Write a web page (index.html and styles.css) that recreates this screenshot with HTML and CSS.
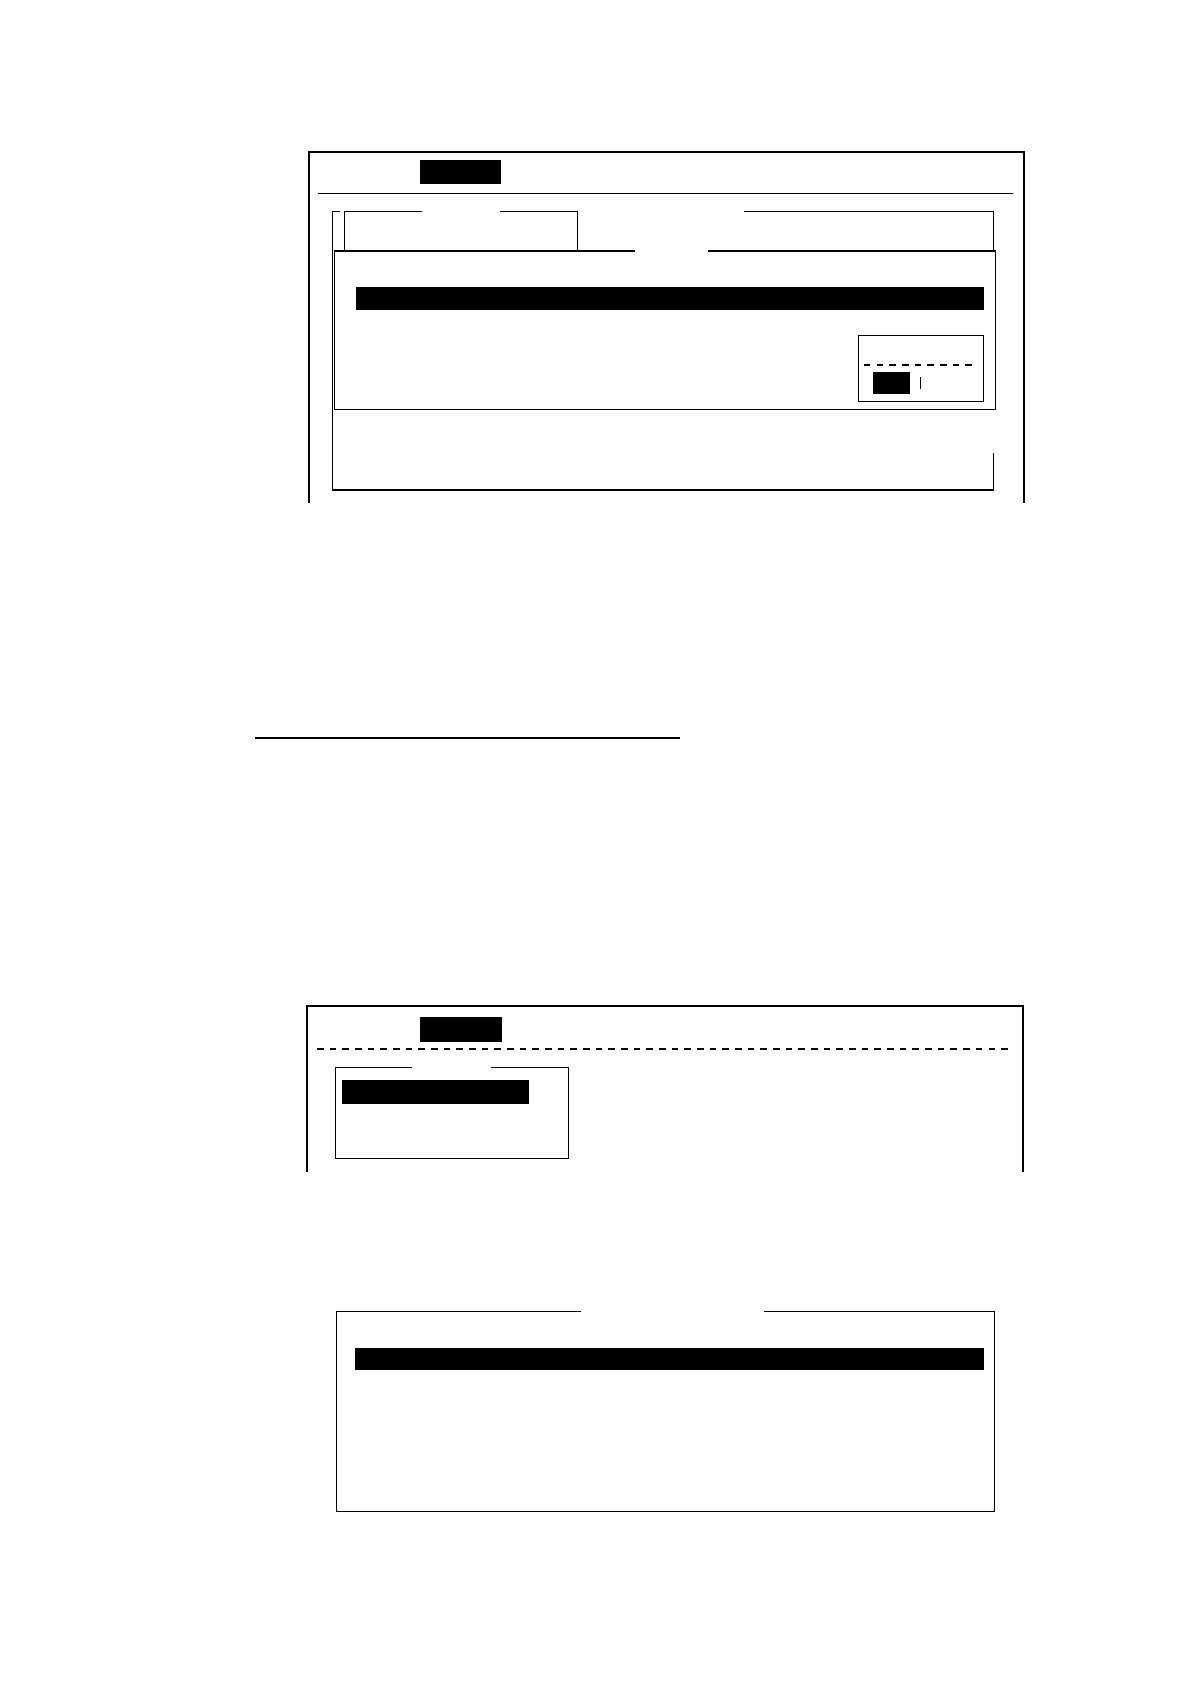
FILE: index.html
```html
<!DOCTYPE html>
<html lang="en">
<head>
<meta charset="utf-8">
<title>Screen figures</title>
<link rel="stylesheet" href="styles.css">
</head>
<body>
<div class="page">

  <section class="frame frame-one">
    <div class="title-row title-row-one"><div class="tag tag-one"></div></div>
    <div class="rule"></div>
    <div class="group">
      <div class="tabs">
        <div class="stub"></div>
        <div class="tab-one">
          <div class="gtop"><div class="seg seg-a"></div><div class="gap gap-a"></div><div class="seg seg-fill"></div></div>
        </div>
        <div class="tab-two"></div>
      </div>
      <div class="panel">
        <div class="ptop"><div class="pseg pseg-a"></div><div class="gap pgap"></div><div class="pseg seg-fill"></div></div>
        <div class="bar pbar"></div>
        <div class="mini">
          <div class="dash mini-dash"></div>
          <div class="mini-row">
            <div class="mtag"></div>
            <div class="cursor"></div>
          </div>
        </div>
      </div>
      <div class="lower"><div class="rstub"></div></div>
    </div>
  </section>

  <div class="sep"></div>

  <section class="frame frame-two">
    <div class="title-row title-row-two"><div class="tag tag-two"></div></div>
    <div class="dash dash-two"></div>
    <div class="box box-two">
      <div class="gtop"><div class="seg seg-b"></div><div class="gap gap-b"></div><div class="seg seg-fill"></div></div>
      <div class="bar bar-two"></div>
    </div>
  </section>

  <section class="box box-three">
    <div class="gtop"><div class="seg seg-c"></div><div class="gap gap-c"></div><div class="seg seg-fill"></div></div>
    <div class="bar bar-three"></div>
  </section>

</div>
</body>
</html>
```
FILE: styles.css
```css
* { box-sizing: border-box; }

html, body {
  margin: 0;
  padding: 0;
  background: #ffffff;
  font-family: "Liberation Sans", Arial, sans-serif;
}

.page {
  width: 1190px;
  min-height: 1684px;
  padding-top: 151px;
  overflow: hidden;
}

/* ---------- shared ---------- */
.frame {
  border: 2px solid #000;
  border-bottom: 0;
}
.tag, .bar, .mtag { background: #000; }
.seg, .pseg { background: #000; height: 100%; }
.seg-fill { flex: 1; }
.gtop { display: flex; height: 1px; }
.dash {
  height: 2px;
  background: repeating-linear-gradient(to right, #000 0 6.5px, transparent 6.5px 12.67px);
}

/* ---------- figure one ---------- */
.frame-one {
  margin-left: 308px;
  width: 717px;
  height: 352px;
}
.title-row-one { padding: 7px 0 0 110px; }
.tag-one { width: 81px; height: 24px; }
.rule {
  margin: 9px 0 0 8px;
  width: 695px;
  height: 1px;
  background: #000;
}
.group {
  margin: 17px 0 0 22px;
  width: 662px;
  height: 280px;
  border-left: 1px solid #000;
  border-bottom: 2px solid #000;
}
.tabs { display: flex; height: 39px; }
.stub { width: 7px; height: 1px; background: #000; }
.tab-one {
  margin-left: 4px;
  width: 234px;
  height: 39px;
  border-left: 1px solid #000;
  border-right: 1px solid #000;
}
.seg-a { width: 77px; }
.gap-a { width: 78px; }
.tab-two {
  margin-left: 166px;
  width: 250px;
  height: 39px;
  border-top: 1px solid #000;
  border-right: 1px solid #000;
}
.panel {
  margin-left: 1px;
  width: 662px;
  height: 160px;
  border: 1px solid #000;
  border-top: 0;
}
.ptop { display: flex; height: 2px; }
.pseg-a { width: 300px; }
.pgap { width: 73px; }
.pbar { margin: 35px 0 0 21px; width: 628px; height: 23px; }
.mini {
  margin: 25px 0 0 523px;
  width: 126px;
  height: 67px;
  border: 1px solid #000;
}
.mini-dash { margin: 28px 0 0 5px; width: 112px; }
.mini-row { display: flex; align-items: flex-start; margin: 6px 0 0 14px; }
.mtag { width: 37px; height: 22px; }
.cursor { margin: 5px 0 0 10px; width: 1px; height: 12px; background: #000; }
.lower { display: flex; justify-content: flex-end; height: 79px; }
.rstub { margin-top: 43px; width: 1px; height: 36px; background: #000; }

/* ---------- separator ---------- */
.sep {
  margin: 234px 0 0 255px;
  width: 425px;
  height: 2px;
  background: #000;
}

/* ---------- figure two ---------- */
.frame-two {
  margin: 266px 0 0 306px;
  width: 718px;
  height: 167px;
}
.title-row-two { padding: 10px 0 0 112px; }
.tag-two { width: 82px; height: 25px; }
.dash-two { margin: 6px 0 0 9px; width: 693px; }
.box {
  border: 1px solid #000;
  border-top: 0;
}
.box-two {
  margin: 17px 0 0 27px;
  width: 234px;
  height: 92px;
}
.seg-b { width: 76px; }
.gap-b { width: 79px; }
.bar-two { margin: 12px 0 0 6px; width: 187px; height: 24px; }

/* ---------- figure three ---------- */
.box-three {
  margin: 139px 0 0 336px;
  width: 659px;
  height: 201px;
}
.seg-c { width: 244px; }
.gap-c { width: 183px; }
.bar-three { margin: 36px 0 0 18px; width: 629px; height: 22px; }
```
